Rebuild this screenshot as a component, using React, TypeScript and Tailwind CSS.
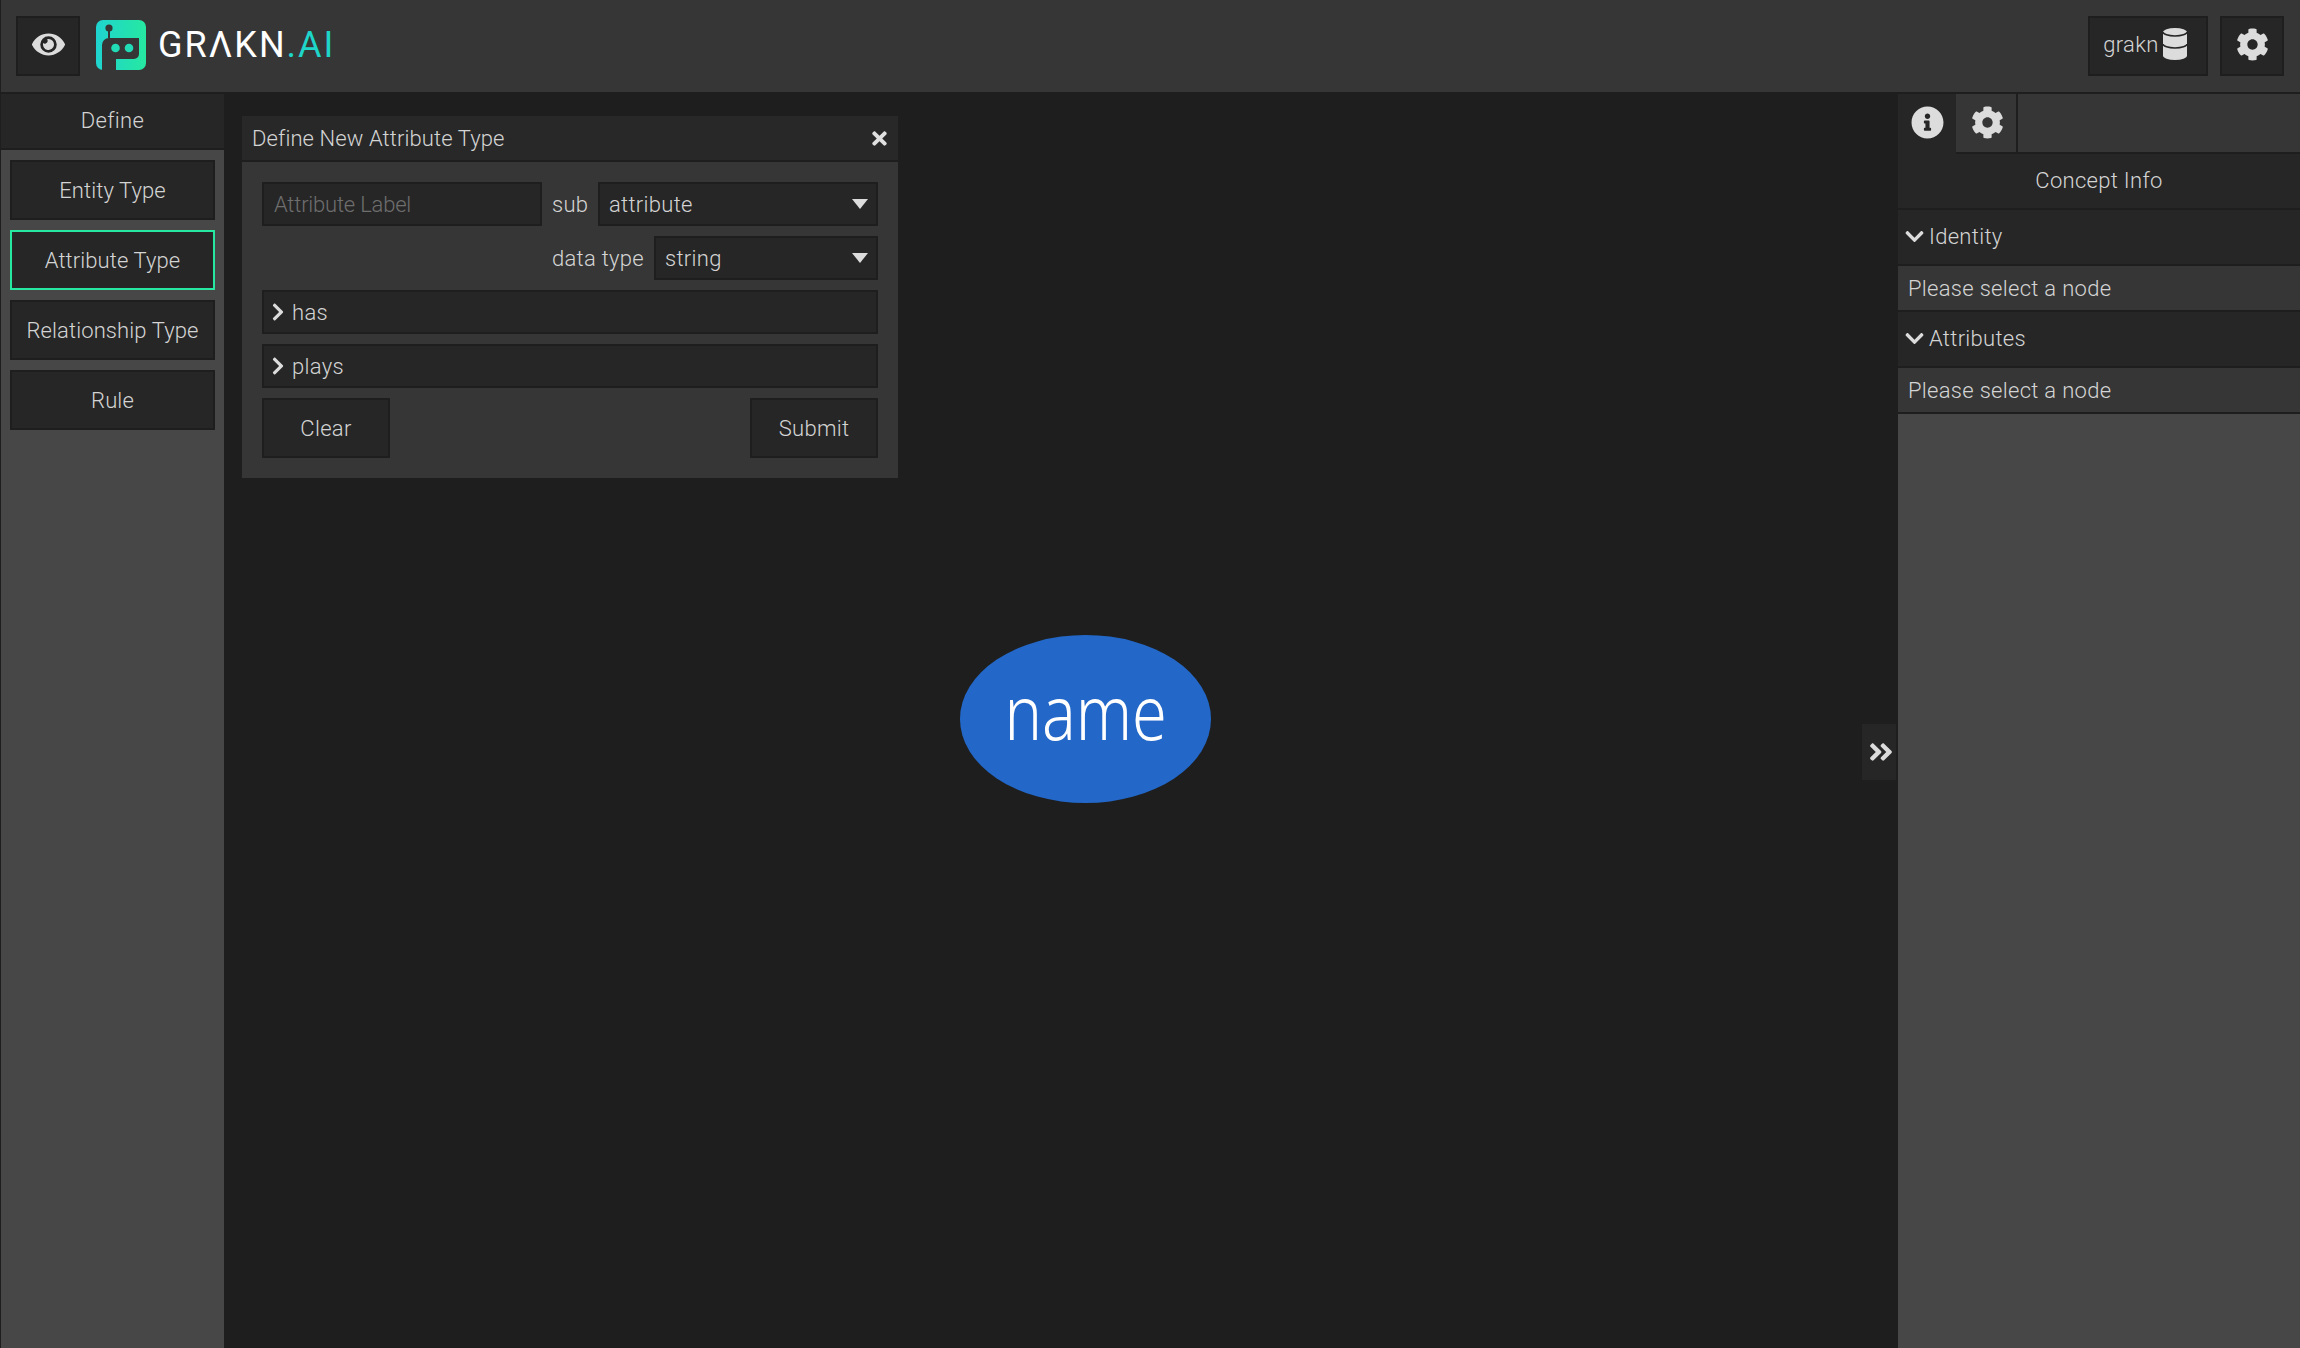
import { FaChevronDown, FaChevronRight, FaCog, FaEye, FaInfoCircle, FaTimes, FaAngleDoubleRight } from "react-icons/fa";

const DEFINE_TYPES = ["Entity Type", "Attribute Type", "Relationship Type", "Rule"];

function Logo() {
  return (
    <svg width="50" height="50" viewBox="0 0 50 50">
      <defs>
        <linearGradient id="logoFill" x1="0" y1="0" x2="1" y2="0">
          <stop offset="0" stopColor="#1fd4d0" />
          <stop offset="1" stopColor="#26e8a0" />
        </linearGradient>
      </defs>
      <rect width="50" height="50" rx="7" fill="url(#logoFill)" />
      <circle cx="13" cy="8" r="3.6" fill="#363636" />
      <rect x="12" y="9" width="2" height="9" fill="#363636" />
      <path d="M6 50V25a7 7 0 0 1 7-7h30v16a5 5 0 0 1-5 5H20v11z" fill="#363636" />
      <circle cx="19.5" cy="28" r="4.3" fill="#22dcb8" />
      <circle cx="33" cy="28" r="4.3" fill="#22dcb8" />
    </svg>
  );
}

function DatabaseIcon() {
  return (
    <svg width="24" height="32" viewBox="0 0 24 32">
      <path d="M0 4.5a12 4.5 0 0 1 24 0v23a12 4.5 0 0 1-24 0z" fill="#dcdcdc" />
      <path d="M0 4a12 4 0 0 0 24 0M0 16a12 4 0 0 0 24 0" fill="none" stroke="#262626" strokeWidth="1.5" />
    </svg>
  );
}

function Caret() {
  return <span className="h-0 w-0 border-x-[8px] border-t-[10px] border-x-transparent border-t-[#dcdcdc]" />;
}

function Select({ value, className }: { value: string; className: string }) {
  return (
    <div className={`flex h-11 items-center justify-between border-2 border-[#1e1e1e] bg-[#262626] pl-[9px] pr-[8px] ${className}`}>
      <span>{value}</span>
      <Caret />
    </div>
  );
}

function Collapsed({ label }: { label: string }) {
  return (
    <div className="flex h-11 items-center gap-[4px] border-2 border-[#1e1e1e] bg-[#262626] pl-[4px]">
      <FaChevronRight className="text-[20px] text-[#dcdcdc]" />
      <span>{label}</span>
    </div>
  );
}

function InfoSection({ label }: { label: string }) {
  return (
    <>
      <div className="flex h-[56px] items-center gap-[4px] border-b-2 border-[#1e1e1e] bg-[#262626] pb-[2px] pl-[6px]">
        <FaChevronDown className="text-[21px] text-[#dcdcdc]" />
        <span>{label}</span>
      </div>
      <div className="flex h-[46px] items-center border-b-2 border-[#1e1e1e] bg-[#363636] pl-[10px]">Please select a node</div>
    </>
  );
}

export default function App() {
  return (
    <div className="flex h-[1348px] w-[2300px] flex-col overflow-hidden bg-[#1e1e1e] font-['Roboto',sans-serif] text-[22px] font-light tracking-[0.3px] text-[#d4d4d4]">
      <header className="flex h-[94px] shrink-0 items-start justify-between border-b-2 border-l border-[#1e1e1e] bg-[#363636] pt-4 pl-[15px] pr-4">
        <div className="flex items-start">
          <button className="flex h-[60px] w-16 items-center justify-center border-2 border-[#1e1e1e] bg-[#262626] pb-1">
            <FaEye className="text-[33px] text-[#dcdcdc]" />
          </button>
          <div className="ml-4 mt-1"><Logo /></div>
          <span className="ml-[12px] mt-[8px] text-[36px] font-normal leading-[42px] tracking-[2px] text-white">
            GRΛKN<span className="text-[#1fd4c8]">.AI</span>
          </span>
        </div>
        <div className="flex gap-3">
          <button className="flex h-[60px] w-[120px] items-center justify-center gap-[4px] border-2 border-[#1e1e1e] bg-[#262626] pb-1 pr-[6px]">
            <span>grakn</span>
            <DatabaseIcon />
          </button>
          <button className="flex h-[60px] w-16 items-center justify-center border-2 border-[#1e1e1e] bg-[#262626] pb-1">
            <FaCog className="text-[33px] text-[#dcdcdc]" />
          </button>
        </div>
      </header>

      <div className="flex min-h-0 flex-1">
        <aside className="flex w-[224px] shrink-0 flex-col border-l border-[#1e1e1e] bg-[#474747]">
          <div className="flex h-[56px] items-center justify-center border-b-2 border-[#1e1e1e] bg-[#262626] pb-[2px]">Define</div>
          <div className="flex flex-col gap-[10px] px-[9px] pt-[10px] tracking-[0.1px]">
            {DEFINE_TYPES.map((t) => (
              <button
                key={t}
                className={`h-[60px] border-2 bg-[#262626] ${t === "Attribute Type" ? "border-[#26e8a0]" : "border-[#1e1e1e]"}`}
              >
                {t}
              </button>
            ))}
          </div>
        </aside>

        <main className="relative flex-1 bg-[#1e1e1e]">
          <section className="absolute left-[18px] top-[22px] w-[656px] bg-[#363636]">
            <div className="flex h-[46px] items-center justify-between border-b-2 border-[#1e1e1e] bg-[#282828] pl-[10px] pr-[8px] tracking-[0.1px]">
              <span>Define New Attribute Type</span>
              <FaTimes className="text-[21px] text-[#e0e0e0]" />
            </div>
            <div className="flex flex-col gap-[10px] px-5 pb-5 pt-5">
              <div className="flex items-center">
                <div className="flex h-11 w-[280px] items-center border-2 border-[#1e1e1e] bg-[#262626] pl-[10px] tracking-[-0.2px] text-[#6e6e6e]">Attribute Label</div>
                <span className="ml-[10px] w-[46px]">sub</span>
                <Select value="attribute" className="flex-1" />
              </div>
              <div className="flex items-center justify-end">
                <span className="mr-[10px]">data type</span>
                <Select value="string" className="w-[224px]" />
              </div>
              <Collapsed label="has" />
              <Collapsed label="plays" />
              <div className="flex justify-between">
                <button className="h-[60px] w-[128px] border-2 border-[#1e1e1e] bg-[#262626]">Clear</button>
                <button className="h-[60px] w-[128px] border-2 border-[#1e1e1e] bg-[#262626]">Submit</button>
              </div>
            </div>
          </section>

          <div className="absolute left-[736px] top-[541px] flex h-[168px] w-[251px] items-center justify-center rounded-[50%] bg-[#2368c8] pb-[16px] font-['Noto_Sans',sans-serif] text-[75px] font-light tracking-normal text-white">
            <span className="scale-x-[0.84]">name</span>
          </div>

          <button className="absolute right-[2px] top-[630px] flex h-[56px] w-[34px] items-center justify-center bg-[#262626] pl-[4px]">
            <FaAngleDoubleRight className="text-[28px] text-[#dcdcdc]" />
          </button>
        </main>

        <aside className="flex w-[402px] shrink-0 flex-col bg-[#474747]">
          <div className="flex h-[60px] border-b-2 border-[#1e1e1e] bg-[#363636]">
            <div className="relative flex h-[60px] w-[58px] items-center justify-center bg-[#262626] pb-1">
              <FaInfoCircle className="text-[33px] text-[#dcdcdc]" />
            </div>
            <div className="ml-[2px] flex w-[60px] items-center justify-center border-r-2 border-[#1e1e1e] pb-[2px]">
              <FaCog className="text-[33px] text-[#dcdcdc]" />
            </div>
          </div>
          <div className="flex h-[56px] items-center justify-center border-b-2 border-[#1e1e1e] bg-[#262626] pb-[2px]">Concept Info</div>
          <InfoSection label="Identity" />
          <InfoSection label="Attributes" />
        </aside>
      </div>
    </div>
  );
}
